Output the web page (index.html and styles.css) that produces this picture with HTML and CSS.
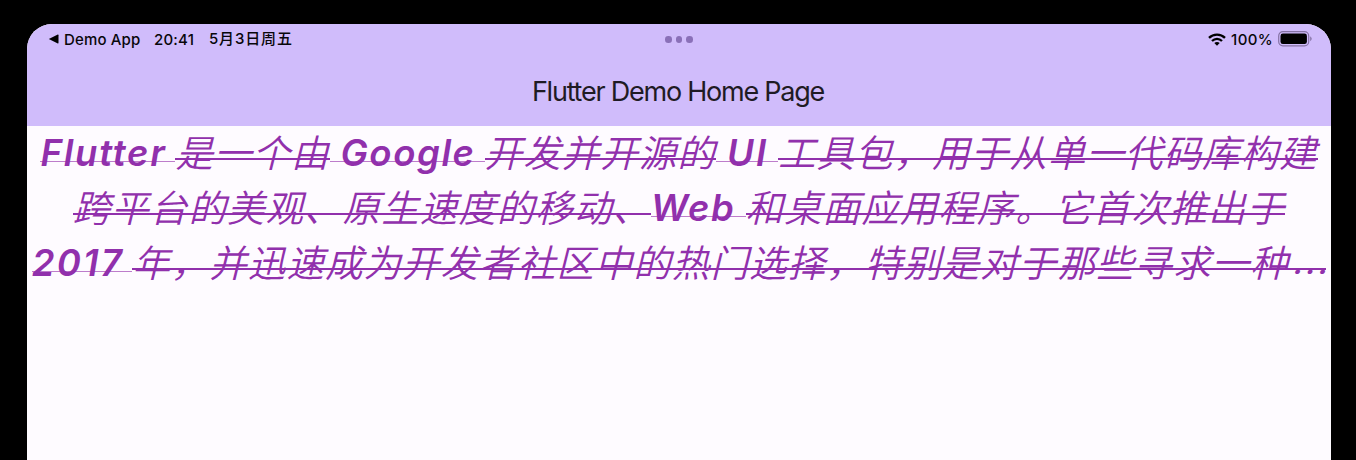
FILE: index.html
```html
<!DOCTYPE html>
<html lang="zh-CN">
<head>
<meta charset="utf-8">
<title>Flutter Demo</title>
<link rel="stylesheet" href="styles.css">
</head>
<body>
<main class="screen">
  <header class="app-bar">
    <div class="status">
      <div class="status-left">
        <svg class="back" viewBox="0 0 10 10"><path d="M.3 5 9.3.6Q10 .4 10 1.2v7.6q0 .8-.7.6z"/></svg>
        <span class="app">Demo App</span><span class="time">20:41</span><span class="date">5月3日周五</span>
      </div>
      <div class="dots"><i></i><i></i><i></i></div>
      <div class="status-right">
        <svg class="wifi" viewBox="0 0 18 13"><g fill="none" stroke="#000" stroke-width="2.3"><path d="M1 4.9C5.3.5 12.7.5 17 4.9"/><path d="M4 8C6.9 5.1 11.1 5.1 14 8"/></g><path d="M9 12.8 6.3 10.1C7.7 8.7 10.3 8.7 11.7 10.1z"/></svg>
        <span class="percent">100%</span>
        <svg class="battery" viewBox="0 0 34 16"><rect x=".7" y=".7" width="30" height="14.2" rx="4.2" fill="none" stroke="#8572a4" stroke-width="1.2"/><rect x="2.5" y="2.5" width="26.4" height="10.6" rx="2.4"/><path d="M32.2 5.3q3 2.5 0 5z" fill="#8572a4"/></svg>
      </div>
    </div>
    <h1 class="title">Flutter Demo Home Page</h1>
  </header>
  <section class="copy">
    <p class="line"><span class="latin flutter">Flutter </span><span class="han">是一个由</span><span class="latin google"> Google </span><span class="han">开发并开源的</span><span class="latin ui"> UI </span><span class="han">工具包，用于从单一代码库构建</span></p>
    <p class="line"><span class="han">跨平台的美观、原生速度的移动、</span><span class="latin web">Web </span><span class="han">和桌面应用程序。它首次推出于</span></p>
    <p class="line"><span class="latin year">2017 </span><span class="han">年，并迅速成为开发者社区中的热门选择，特别是对于那些寻求一种<span class="ellipsis">…</span></span></p>
  </section>
</main>
</body>
</html>
```
FILE: styles.css
```css
* { box-sizing: border-box; }
body { margin: 0; background: #000; font-family: Inter, "Noto Sans CJK SC", sans-serif; }
.screen { width: 1304px; height: 436px; margin: 24px 0 0 27px; background: #fefbff; border-radius: 25px 25px 0 0; overflow: hidden; }
.app-bar { height: 102px; background: #d0bcfb; }
.status { display: grid; grid-template-columns: 1fr auto 1fr; align-items: center; height: 30px; padding: 0 19px 0 21px; font-size: 15px; font-weight: 500; color: #08070a; white-space: nowrap; }
.status-left, .status-right { display: flex; align-items: center; }
.status-right { justify-content: flex-end; }
.back { width: 11px; height: 10px; margin-right: 5px; }
.app { width: 90px; letter-spacing: .15px; }
.time { width: 55px; letter-spacing: .2px; }
.date { line-height: 20px; letter-spacing: .85px; }
.dots { display: flex; gap: 4px; margin: 1px 2px 0 0; }
.dots i { width: 6.5px; height: 6.5px; border-radius: 50%; background: #8a70b8; }
.wifi { width: 18px; height: 13px; margin-right: 5px; }
.percent { width: 47px; letter-spacing: .4px; }
.battery { width: 34px; height: 16px; }
.title { margin: 21px 0 0; font-size: 27px; line-height: 34px; font-weight: 400; text-align: center; text-indent: -2px; letter-spacing: -1.23px; color: #1f1b24; }
.copy { color: #9130ac; font-size: 36.5px; font-style: italic; }
.line { display: flex; justify-content: center; height: 55px; margin: 0; line-height: 55px; white-space: pre; }
.han { height: 55px; font-family: "Noto Sans CJK SC", sans-serif; font-size: 37.5px; font-weight: 350; line-height: 49px; letter-spacing: 1.05px; background: linear-gradient(#9130ac, #9130ac) 0 32px / 100% 2px no-repeat; }
.latin { height: 55px; font-weight: 600; line-height: 55px; letter-spacing: 1.6px; background: linear-gradient(#bd7dcb, #bd7dcb) 0 35px / 100% 1px no-repeat; }
.ellipsis { line-height: 0; vertical-align: -9px; margin-left: -1px; }
.flutter { width: 135px; letter-spacing: 1.8px; }
.google { width: 155px; }
.ui { width: 62px; letter-spacing: 2px; }
.web { width: 94.5px; }
.year { width: 100.5px; letter-spacing: 2.3px; }
```
